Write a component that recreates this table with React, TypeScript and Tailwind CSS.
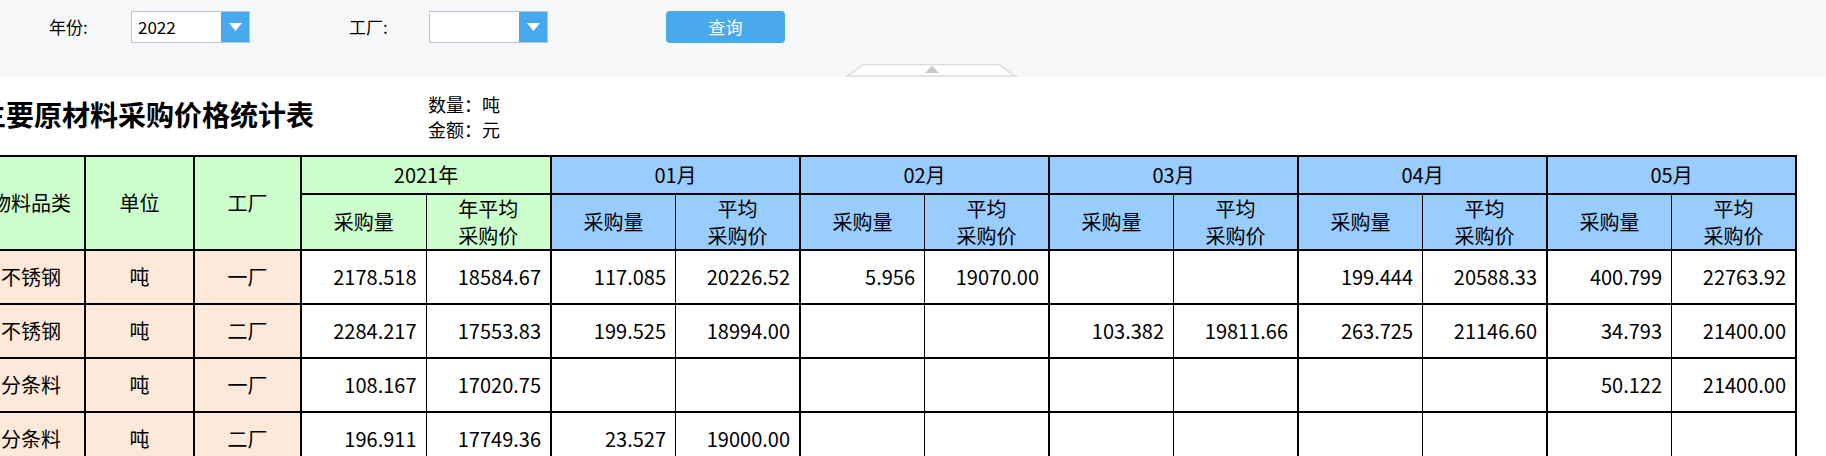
import React from 'react';

type Row = { name: string; unit: string; factory: string; values: string[] };

const months = ['01月', '02月', '03月', '04月', '05月'];

const rows: Row[] = [
  {
    name: '不锈钢', unit: '吨', factory: '一厂',
    values: ['2178.518', '18584.67', '117.085', '20226.52', '5.956', '19070.00', '', '', '199.444', '20588.33', '400.799', '22763.92'],
  },
  {
    name: '不锈钢', unit: '吨', factory: '二厂',
    values: ['2284.217', '17553.83', '199.525', '18994.00', '', '', '103.382', '19811.66', '263.725', '21146.60', '34.793', '21400.00'],
  },
  {
    name: '分条料', unit: '吨', factory: '一厂',
    values: ['108.167', '17020.75', '', '', '', '', '', '', '', '', '50.122', '21400.00'],
  },
  {
    name: '分条料', unit: '吨', factory: '二厂',
    values: ['196.911', '17749.36', '23.527', '19000.00', '', '', '', '', '', '', '', ''],
  },
];

const SelectBox = ({ value }: { value: string }) => (
  <div className="flex h-[32px] w-[119px] border border-[#bcc3d0] bg-white">
    <div className="flex flex-1 items-center pl-[6px] text-[17px] text-black">{value}</div>
    <div className="flex w-[28px] items-center justify-center bg-[#49a9ee]">
      <svg width="13" height="8" viewBox="0 0 13 8">
        <path d="M0 0 L13 0 L6.5 8 Z" fill="#fff" />
      </svg>
    </div>
  </div>
);

export default function App() {
  const cellL = 'border-t-2 border-b-2 border-l-2 border-r border-black';
  const cellR = 'border-t-2 border-b-2 border-r-2 border-l border-black';

  return (
    <div className="min-h-screen bg-white font-['Noto_Sans_CJK_SC',sans-serif] text-black overflow-hidden">
      {/* 查询条件 */}
      <div className="relative h-[77px] bg-[#f6f7f9]">
        <div className="flex items-center pl-[49px] pt-[11px]">
          <div className="w-[82px] text-[17px]">年份:</div>
          <SelectBox value="2022" />
          <div className="ml-[99px] w-[80px] text-[17px]">工厂:</div>
          <SelectBox value="" />
          <button className="ml-[118px] h-[32px] w-[119px] rounded-[4px] bg-[#4aa8ec] text-[17px] text-white">
            查询
          </button>
        </div>
        <div className="absolute bottom-0 left-[846px]">
          <svg width="171" height="13" viewBox="0 0 171 13">
            <path d="M1 12.5 L17 0.5 L153 0.5 L169 12.5" fill="#fff" stroke="#dcdcdc" strokeWidth="1.5" />
            <path d="M0 12 L171 12" stroke="#dcdcdc" strokeWidth="1.5" />
            <path d="M79 9 L86 1.5 L93 9 Z" fill="#c8c8c8" />
          </svg>
        </div>
      </div>

      {/* 标题 */}
      <div className="flex h-[78px] items-center pt-[2px]">
        <div className="mb-[6px] ml-[-22px] w-[450px] text-[28px] font-bold">主要原材料采购价格统计表</div>
        <div className="text-[18px] leading-[25px]">
          <div>数量：吨</div>
          <div>金额：元</div>
        </div>
      </div>

      {/* 表格 */}
      <table className="ml-[-24px] w-[1819px] table-fixed border-collapse text-[20px]">
        <colgroup>
          <col className="w-[108px]" />
          <col className="w-[109px]" />
          <col className="w-[107px]" />
          <col className="w-[125px]" />
          <col className="w-[125px]" />
          {months.map(m => (
            <React.Fragment key={m}>
              <col className="w-[124.5px]" />
              <col className="w-[124.5px]" />
            </React.Fragment>
          ))}
        </colgroup>
        <thead>
          <tr className="h-[38px]">
            <th rowSpan={2} className="border-2 border-black bg-[#ccffcc] font-normal">物料品类</th>
            <th rowSpan={2} className="border-2 border-black bg-[#ccffcc] font-normal">单位</th>
            <th rowSpan={2} className="border-2 border-black bg-[#ccffcc] font-normal">工厂</th>
            <th colSpan={2} className="border-2 border-black bg-[#ccffcc] font-normal">2021年</th>
            {months.map(m => (
              <th key={m} colSpan={2} className="border-2 border-black bg-[#99ccff] font-normal">{m}</th>
            ))}
          </tr>
          <tr className="h-[55px]">
            <th className={`${cellL} bg-[#ccffcc] font-normal`}>采购量</th>
            <th className={`${cellR} bg-[#ccffcc] font-normal leading-[27px]`}>年平均<br />采购价</th>
            {months.map(m => (
              <React.Fragment key={m}>
                <th className={`${cellL} bg-[#99ccff] font-normal`}>采购量</th>
                <th className={`${cellR} bg-[#99ccff] font-normal leading-[27px]`}>平均<br />采购价</th>
              </React.Fragment>
            ))}
          </tr>
        </thead>
        <tbody>
          {rows.map((r, i) => (
            <tr key={i} className="h-[54px]">
              <td className="border-2 border-black bg-[#fde9d9] text-center">{r.name}</td>
              <td className="border-2 border-black bg-[#fde9d9] text-center">{r.unit}</td>
              <td className="border-2 border-black bg-[#fde9d9] text-center">{r.factory}</td>
              {r.values.map((v, j) => (
                <td key={j} className={`${j % 2 === 0 ? cellL : cellR} pr-[9px] text-right`}>{v}</td>
              ))}
            </tr>
          ))}
        </tbody>
      </table>
    </div>
  );
}
